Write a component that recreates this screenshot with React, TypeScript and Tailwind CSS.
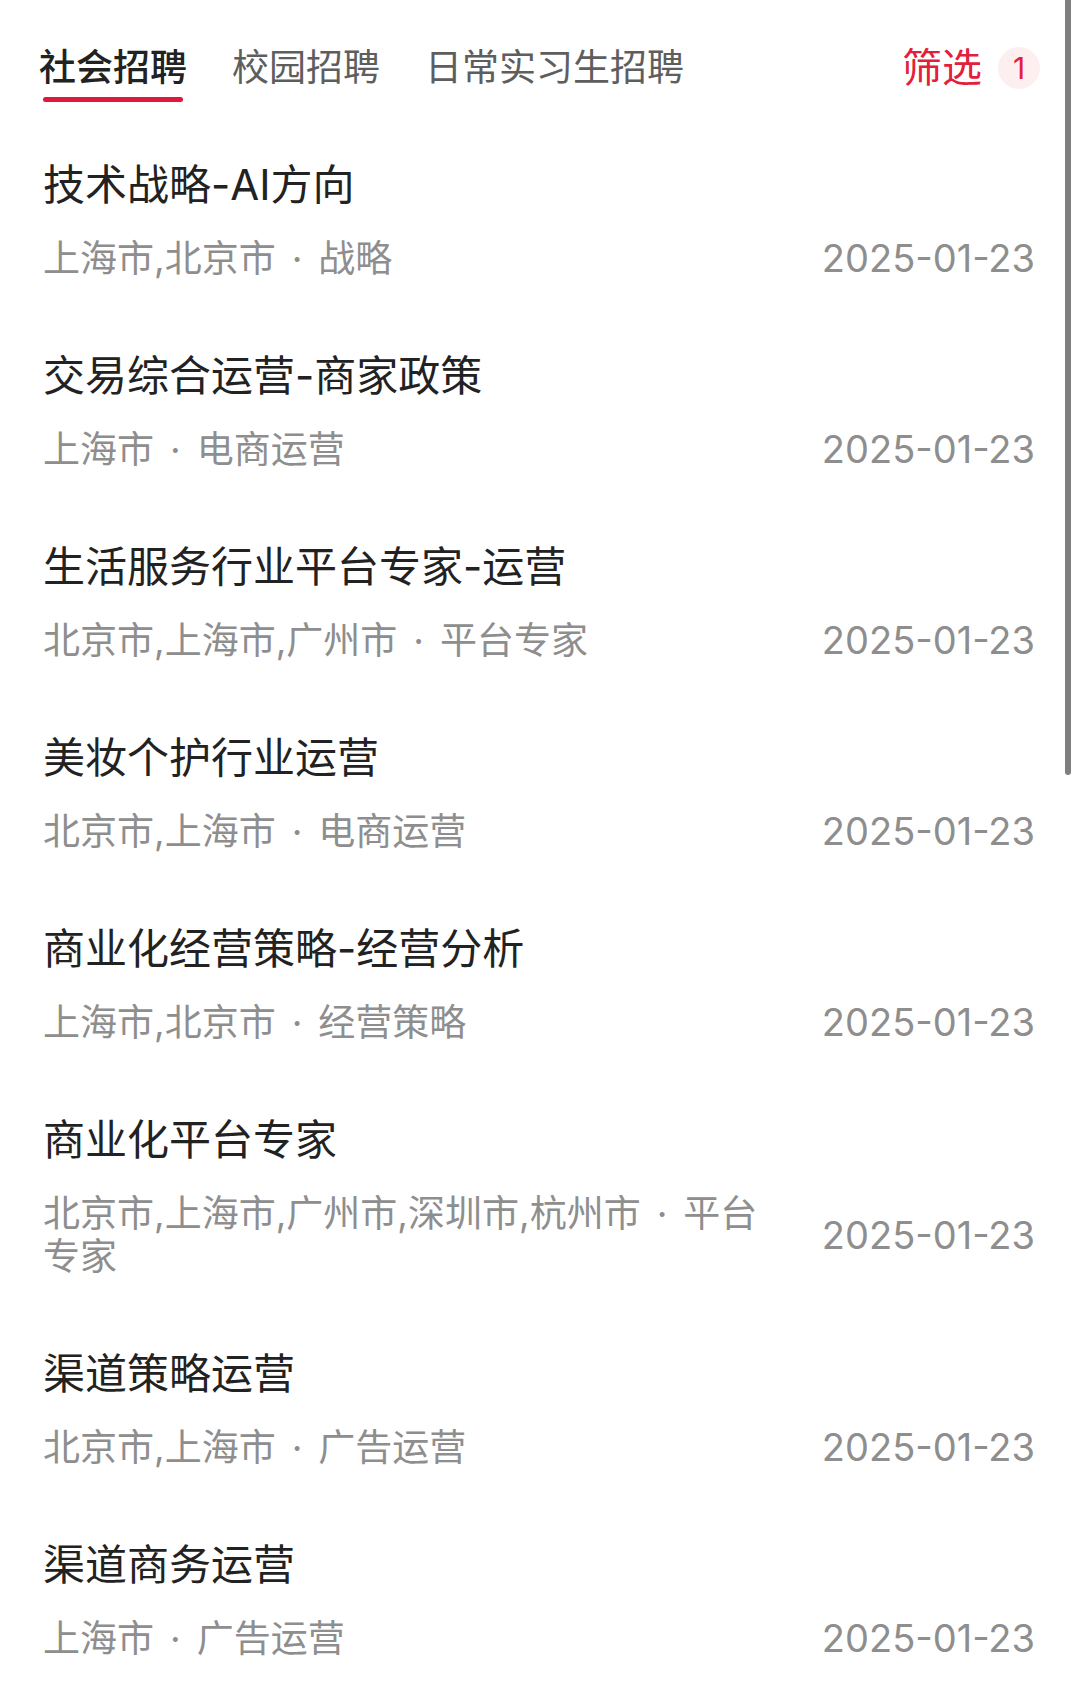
import React from "react";

interface Job {
  title: string;
  cities: string;
  category: string;
  date: string;
}

const jobs: Job[] = [
  { title: "技术战略-AI方向", cities: "上海市,北京市", category: "战略", date: "2025-01-23" },
  { title: "交易综合运营-商家政策", cities: "上海市", category: "电商运营", date: "2025-01-23" },
  { title: "生活服务行业平台专家-运营", cities: "北京市,上海市,广州市", category: "平台专家", date: "2025-01-23" },
  { title: "美妆个护行业运营", cities: "北京市,上海市", category: "电商运营", date: "2025-01-23" },
  { title: "商业化经营策略-经营分析", cities: "上海市,北京市", category: "经营策略", date: "2025-01-23" },
  { title: "商业化平台专家", cities: "北京市,上海市,广州市,深圳市,杭州市", category: "平台专家", date: "2025-01-23" },
  { title: "渠道策略运营", cities: "北京市,上海市", category: "广告运营", date: "2025-01-23" },
  { title: "渠道商务运营", cities: "上海市", category: "广告运营", date: "2025-01-23" },
];

const tabs = ["社会招聘", "校园招聘", "日常实习生招聘"];

const JobRow = ({ job }: { job: Job }) => {
  return (
    <div className="pt-[32px] pb-[36px]">
      <div className="text-[42px] leading-[56px] text-[#222222] whitespace-nowrap">{job.title}</div>
      <div className="mt-[24px] flex items-center justify-between gap-[56px]">
        <div className="flex-1 text-[37px] leading-[43px] text-[#8e8e8e]">
          {job.cities}
          <span className="px-[16px]">·</span>
          {job.category}
        </div>
        <div className="shrink-0 text-[38px] leading-[43px] text-[#8e8e8e]">{job.date}</div>
      </div>
    </div>
  );
};

export default function App() {
  const active = 0;
  return (
    <div
      className="relative w-[1080px] h-[1686px] overflow-hidden bg-white"
      style={{ fontFamily: 'Inter, "Noto Sans CJK SC", "Noto Sans", sans-serif' }}
    >
      {/* tabs */}
      <div className="flex items-start justify-between pl-[39px] pr-[40px] pt-[44px] h-[125px]">
        <div className="flex gap-[45px]">
          {tabs.map((t, i) => (
            <div key={t} className="flex flex-col items-center">
              <span
                className={
                  i === active
                    ? "text-[37px] leading-[48px] font-medium text-[#222222]"
                    : "text-[37px] leading-[48px] text-[#5e5e5e]"
                }
              >
                {t}
              </span>
              {i === active && <div className="mt-[5px] w-[140px] h-[5px] rounded-full bg-[#e3173a]" />}
            </div>
          ))}
        </div>
        <div className="flex items-center gap-[16px]">
          <span className="text-[40px] leading-[48px] text-[#e3203a]">筛选</span>
          <span className="flex items-center justify-center w-[42px] h-[42px] rounded-full bg-[#fdeef0] text-[30px] text-[#e3203a]">
            1
          </span>
        </div>
      </div>

      {/* list */}
      <div className="pl-[43px] pr-[45px]">
        {jobs.map((job, i) => (
          <JobRow key={i} job={job} />
        ))}
      </div>

      {/* scrollbar */}
      <div className="absolute right-[9px] top-0 w-[6px] h-[775px] rounded-b-full bg-[#7f7f7f]" />
    </div>
  );
}
